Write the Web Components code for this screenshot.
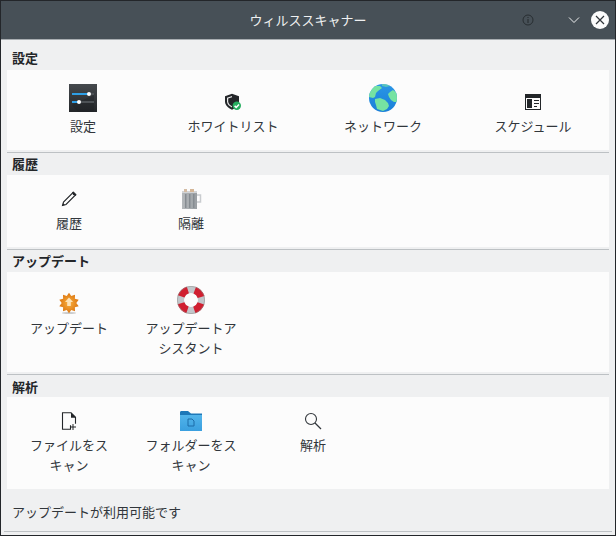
<!DOCTYPE html>
<html lang="ja"><head><meta charset="utf-8"><title>ウィルススキャナー</title>
<style>
html,body{margin:0;padding:0;background:#eff0f1}
body{font-family:"Noto Sans CJK JP","Noto Sans",sans-serif;font-size:13px;color:#31363b}
</style></head><body>
<kcm-window>
  <kcm-titlebar slot="title">ウィルススキャナー</kcm-titlebar>
  <kcm-section heading="設定" cols="4" first>
    <kcm-item tall><svg slot="icon" width="28" height="28" viewBox="0 0 28 28"><defs><linearGradient id="g1" x1="0" y1="0" x2="0" y2="1"><stop offset="0" stop-color="#45494d"/><stop offset="1" stop-color="#232629"/></linearGradient></defs><rect width="28" height="28" fill="url(#g1)"/><path d="M3 21 25 11v17H9z" fill="#1c1f22" opacity=".35"/><rect x="3" y="9" width="22" height="2" fill="#4d5256"/><rect x="3" y="17" width="22" height="2" fill="#4d5256"/><rect x="3" y="9" width="17" height="2" fill="#2e9fe6"/><rect x="3" y="17" width="7" height="2" fill="#2e9fe6"/><circle cx="20" cy="10" r="2" fill="#fff"/><circle cx="10" cy="18" r="2" fill="#fff"/></svg>設定</kcm-item>
    <kcm-item tall><svg slot="icon" width="18" height="18" viewBox="0 0 18 18" style="margin:0 0 1px 0"><path d="M8 .8 1 3.200v5c0 4 3 6.700 7 8.500 4-1.800 7-4.500 7-8.500v-5z" fill="#232629"/><path d="M8 3 3 4.800v3.400c0 2.800 2 4.800 5 6.200z" fill="#fff" opacity=".9"/><path d="M8 4.200 4.200 5.600v2.600c0 2.200 1.500 3.800 3.800 5 2.300-1.200 3.800-2.800 3.800-5V5.600z" fill="#232629"/><circle cx="12.800" cy="12.800" r="4.200" fill="#27ae60"/><path d="m10.600 12.900 1.600 1.500 2.800-3" fill="none" stroke="#fff" stroke-width="1.500"/></svg>ホワイトリスト</kcm-item>
    <kcm-item tall><svg slot="icon" width="28" height="28" viewBox="0 0 28 28"><defs><linearGradient id="g2" x1="0" y1="0" x2="0" y2="1"><stop offset="0" stop-color="#2a96e6"/><stop offset="1" stop-color="#1a7fd8"/></linearGradient><clipPath id="c2"><circle cx="14" cy="14" r="14"/></clipPath></defs><circle cx="14" cy="14" r="14" fill="url(#g2)"/><g clip-path="url(#c2)" fill="#76e3a2"><path d="M2 2h9l2 2-4 3-2 2-1 4-2 1-4-1V6z"/><path d="M6 15l5-1 5 2 3 3 1 3-2 3-4 2-6-2-1-4-1-3z"/><path d="M21 8l3-2 4 3v9l-3 0-3-2-2-3-1-3z"/><path d="M13 0h8v2l-4 1-4-1z" opacity=".6"/></g></svg>ネットワーク</kcm-item>
    <kcm-item tall><svg slot="icon" width="16" height="16" viewBox="0 0 16 16" style="margin-bottom:2px"><path d="M0 0h16v16H0z" fill="#232629"/><rect x="1" y="4" width="14" height="11" fill="#fcfcfc"/><rect x="2" y="5" width="5" height="9" fill="#232629"/><rect x="9" y="6" width="5" height="1" fill="#232629"/><rect x="9" y="9" width="5" height="1" fill="#232629"/><rect x="9" y="12" width="3" height="1" fill="#232629"/></svg>スケジュール</kcm-item>
  </kcm-section>
  <kcm-section heading="履歴">
    <kcm-item><svg slot="icon" width="16" height="16" viewBox="0 0 16 16" style="margin-bottom:2px"><path d="M12 1.500 14.500 4 5 13.500 1.500 14.500 2.500 11z" fill="#fff" stroke="#232629" stroke-width="1.100"/><path d="M11.200 1.200 12.500.5 15.500 3.500 14.800 4.800 12 4z" fill="#232629"/><path d="M1.500 14.500 2 12l2 2z" fill="#232629"/></svg>履歴</kcm-item>
    <kcm-item><svg slot="icon" width="22" height="20" viewBox="0 0 22 20"><defs><linearGradient id="g3" x1="0" y1="0" x2="1" y2="0"><stop offset="0" stop-color="#b4b8bb"/><stop offset="1" stop-color="#9a9fa3"/></linearGradient></defs><path d="M17 6h3.500v7H17" fill="none" stroke="#c9cccf" stroke-width="1.500"/><rect x="2" y="3" width="15" height="17" fill="url(#g3)"/><rect x="5" y="5" width="1.500" height="14" fill="#868c91"/><rect x="9" y="5" width="1.500" height="14" fill="#868c91"/><rect x="13" y="5" width="1.500" height="14" fill="#868c91"/><rect x="2" y="2" width="15" height="2" fill="#d2d4d6"/><rect x="4" y="0" width="3" height="3" fill="#d4bca4"/><rect x="10" y="0" width="4" height="3" fill="#d4b697"/></svg>隔離</kcm-item>
  </kcm-section>
  <kcm-section heading="アップデート">
    <kcm-item tall><svg slot="icon" width="22" height="22" viewBox="0 0 22 22"><defs><radialGradient id="g4"><stop offset="0" stop-color="#f9b040"/><stop offset="1" stop-color="#dd7710"/></radialGradient></defs><ellipse cx="11" cy="21" rx="7" ry="1" fill="#999" opacity=".5"/><path transform="translate(11 11) scale(.97)" d="M0-10.500 2.320-7.130 6.170-8.490 6.070-4.410 9.990-3.240 7.500 0 9.990 3.240 6.070 4.410 6.170 8.490 2.320 7.130 0 10.500-2.320 7.130-6.170 8.490-6.070 4.410-9.990 3.240-7.500 0-9.990-3.240-6.070-4.410-6.170-8.490-2.320-7.130z" fill="url(#g4)"/><path d="m11 5.500 4 4.500h-2.200v4H9.200v-4H7z" fill="#fde3b8"/></svg>アップデート</kcm-item>
    <kcm-item tall><svg slot="icon" width="28" height="28" viewBox="0 0 28 28"><circle cx="14" cy="14" r="10.500" fill="none" stroke="#c3c7cb" stroke-width="7"/><circle cx="14" cy="14" r="10.500" fill="none" stroke="#d01f30" stroke-width="7" stroke-dasharray="9.490 7" stroke-dashoffset="-3.500"/><circle cx="14" cy="14" r="13.700" fill="none" stroke="#8d8a86" stroke-width=".5"/></svg>アップデートアシスタント</kcm-item>
  </kcm-section>
  <kcm-section heading="解析" last>
    <kcm-item><svg slot="icon" width="16" height="18" viewBox="0 0 16 18" style="margin-bottom:1px"><path d="M9.500 13.500v4H1.500V1H10l4.500 4.500V12" fill="none" stroke="#232629" stroke-width="1.100" transform="translate(0 -.2)"/><path d="M10 .8h.4l4.200 4.400v.6H10z" fill="#232629"/><path d="M11.500 12h1v2.500H15v1h-2.500V18h-1v-2.500H9v-1h2.500z" fill="#232629"/></svg>ファイルをスキャン</kcm-item>
    <kcm-item><svg slot="icon" width="22" height="20" viewBox="0 0 22 20"><defs><linearGradient id="g5" x1="0" y1="0" x2="0" y2="1"><stop offset="0" stop-color="#52b4ea"/><stop offset="1" stop-color="#3a9fdf"/></linearGradient></defs><path d="M0 1.500C0 .7.500 0 1.500 0H8l3 2.500h11V6H0z" fill="#1d78b8"/><rect y="4" width="22" height="16" fill="url(#g5)"/><path d="M8 8h4l2 2v5H8z" fill="none" stroke="#1c6ca8" stroke-width="1"/></svg>フォルダーをスキャン</kcm-item>
    <kcm-item><svg slot="icon" width="18" height="18" viewBox="0 0 18 18" style="margin-bottom:1px"><circle cx="7" cy="7" r="5.500" fill="none" stroke="#31363b" stroke-width="1.100"/><path d="m11 11 6 6" stroke="#31363b" stroke-width="1.200"/></svg>解析</kcm-item>
  </kcm-section>
  <kcm-status>アップデートが利用可能です</kcm-status>
</kcm-window>
<script>
function def(name, css, html, extra){
  customElements.define(name, class extends HTMLElement{
    constructor(){super();const r=this.attachShadow({mode:'open'});r.innerHTML='<style>'+css+'</style>'+html;}
    connectedCallback(){ if(extra) extra(this); }
  });
}
def('kcm-window',`:host{display:flex;flex-direction:column;width:616px;height:536px;box-sizing:border-box;border:1px solid #23262a;background:#eff0f1;overflow:hidden}
.body{flex:1;display:flex;flex-direction:column;min-height:0}
.secs{display:flex;flex-direction:column;padding:8px 6px 0}`,
`<slot name="title"></slot><div class="body"><div class="secs"><slot></slot></div></div>`);
def('kcm-titlebar',`:host{display:grid;grid-template-columns:1fr auto 1fr;align-items:center;height:38px;background:#475057;color:#eff0f1;border-bottom:1px solid #a8adb1;font-size:13px;line-height:20px}
.t{grid-column:2}
.b{grid-column:3;display:flex;justify-content:flex-end;align-items:center;padding-right:6px}
svg{display:block}`,
`<div class="t"><slot></slot></div><div class="b">
<svg width="12" height="12" viewBox="0 0 12 12" style="margin-right:34px"><circle cx="6" cy="6" r="5" fill="none" stroke="#24292d" stroke-width=".9"/><rect x="5.500" y="5" width="1" height="4" fill="#24292d"/><rect x="5.500" y="3" width="1" height="1" fill="#24292d"/></svg>
<svg width="12" height="8" viewBox="0 0 12 8" style="margin-right:11px"><path d="M1 1.500 6 6.500l5-5" fill="none" stroke="#eff0f1" stroke-width="1"/></svg>
<svg width="18" height="18" viewBox="0 0 18 18"><circle cx="9" cy="9" r="9" fill="#fcfcfc"/><path d="m5 5 8 8m0-8-8 8" stroke="#31363b" stroke-width="1.200"/></svg>
</div>`);
def('kcm-section',`:host{display:block}
h2{margin:0;height:22px;line-height:22px;padding-left:5px;font-size:13px;font-weight:700;color:#232629}
:host([first]) h2{line-height:20px}
:host([last]) h2{line-height:24px}
.p{background:#fcfcfc;display:grid;padding-left:1px;grid-template-columns:repeat(var(--cols,4),var(--w,122px))}
.l{height:1px;margin-top:2px;background:#bdc1c4}
:host([last]) .l{display:none}`,
`<h2></h2><div class="p"><slot></slot></div><div class="l"></div>`,
el=>{const s=el.shadowRoot;s.querySelector('h2').textContent=el.getAttribute('heading');
 if(el.getAttribute('cols')==='4'){el.style.setProperty('--w','150px');}});
def('kcm-item',`:host{display:flex;flex-direction:column;align-items:center;padding:14px 14px;box-sizing:border-box;text-align:center;line-height:20px;color:#31363b;min-width:0;line-break:strict}
.i{height:20px;display:flex;align-items:flex-end;justify-content:center;margin-bottom:4px}
:host([tall]) .i{height:28px}
::slotted(svg){display:block;flex:none}
.x{width:100%}`,
`<div class="i"><slot name="icon"></slot></div><div class="x"><slot></slot></div>`);
def('kcm-status',`:host{display:block;margin:0 -3px;padding:13px 8px 9px 8px;line-height:20px;color:#31363b;border-bottom:1px solid #bdc1c4}`,`<slot></slot>`);
</script>
</body></html>
